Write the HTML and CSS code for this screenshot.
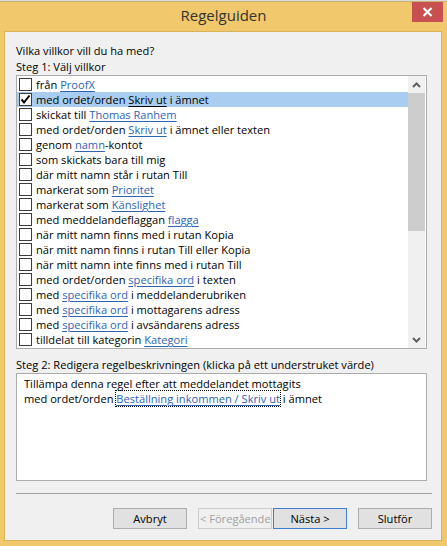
FILE: index.html
```html
<!DOCTYPE html>
<html lang="sv">
<head>
<meta charset="utf-8">
<title>Regelguiden</title>
<link rel="stylesheet" href="styles.css">
</head>
<body>
<div class="window">
  <div class="topstrip"></div>
  <div class="titlebar">
    <div class="title">Regelguiden</div>
    <div class="close">
      <svg width="11" height="10" viewBox="0 0 11 10"><path d="M1.5 1 L9.5 9 M9.5 1 L1.5 9" stroke="#fff" stroke-width="2.2" fill="none"/></svg>
    </div>
  </div>
  <div class="client">
    <div class="label">Vilka villkor vill du ha med?</div>
    <div class="label">Steg 1: Välj villkor</div>
    <div class="listbox">
      <div class="list">
        <div class="row"><span class="cb"></span><span class="txt">från <u class="lnk">ProofX</u></span></div>
        <div class="row sel"><span class="cb"><svg width="11" height="11" viewBox="0 0 11 11"><path d="M1.5 5.5 L4 8.5 L9.5 1.5" stroke="#000" stroke-width="2" fill="none"/></svg></span><span class="txt">med ordet/orden <u class="lnk dark">Skriv ut</u> i ämnet</span></div>
        <div class="row"><span class="cb"></span><span class="txt">skickat till <u class="lnk">Thomas Ranhem</u></span></div>
        <div class="row"><span class="cb"></span><span class="txt">med ordet/orden <u class="lnk">Skriv ut</u> i ämnet eller texten</span></div>
        <div class="row"><span class="cb"></span><span class="txt">genom <u class="lnk">namn</u>-kontot</span></div>
        <div class="row"><span class="cb"></span><span class="txt">som skickats bara till mig</span></div>
        <div class="row"><span class="cb"></span><span class="txt">där mitt namn står i rutan Till</span></div>
        <div class="row"><span class="cb"></span><span class="txt">markerat som <u class="lnk">Prioritet</u></span></div>
        <div class="row"><span class="cb"></span><span class="txt">markerat som <u class="lnk">Känslighet</u></span></div>
        <div class="row"><span class="cb"></span><span class="txt">med meddelandeflaggan <u class="lnk">flagga</u></span></div>
        <div class="row"><span class="cb"></span><span class="txt">när mitt namn finns med i rutan Kopia</span></div>
        <div class="row"><span class="cb"></span><span class="txt">när mitt namn finns i rutan Till eller Kopia</span></div>
        <div class="row"><span class="cb"></span><span class="txt">när mitt namn inte finns med i rutan Till</span></div>
        <div class="row"><span class="cb"></span><span class="txt">med ordet/orden <u class="lnk">specifika ord</u> i texten</span></div>
        <div class="row"><span class="cb"></span><span class="txt">med <u class="lnk">specifika ord</u> i meddelanderubriken</span></div>
        <div class="row"><span class="cb"></span><span class="txt">med <u class="lnk">specifika ord</u> i mottagarens adress</span></div>
        <div class="row"><span class="cb"></span><span class="txt">med <u class="lnk">specifika ord</u> i avsändarens adress</span></div>
        <div class="row"><span class="cb"></span><span class="txt">tilldelat till kategorin <u class="lnk">Kategori</u></span></div>
      </div>
      <div class="scrollbar">
        <div class="arrow">
          <svg width="9" height="6" viewBox="0 0 9 6"><path d="M1 5 L4.5 1.5 L8 5" stroke="#606060" stroke-width="2" fill="none"/></svg>
        </div>
        <div class="thumb"></div>
        <div class="track"></div>
        <div class="arrow">
          <svg width="9" height="6" viewBox="0 0 9 6"><path d="M1 1 L4.5 4.5 L8 1" stroke="#606060" stroke-width="2" fill="none"/></svg>
        </div>
      </div>
    </div>
    <div class="label step2">Steg 2: Redigera regelbeskrivningen (klicka på ett understruket värde)</div>
    <div class="desc">
      <div>Tillämpa denna regel efter att meddelandet mottagits</div>
      <div>med ordet/orden <span class="focus"><u class="lnk">Beställning inkommen / Skriv ut</u></span> i ämnet</div>
    </div>
    <div class="sep"></div>
    <div class="buttons">
      <div class="btn">Avbryt</div>
      <div class="btn disabled"><span>&lt; Föregående</span></div>
      <div class="btn default">Nästa &gt;</div>
      <div class="btn">Slutför</div>
    </div>
  </div>
</div>
</body>
</html>
```

FILE: styles.css
```css
html, body {
  margin: 0;
  padding: 0;
}
body {
  width: 447px;
  height: 546px;
  overflow: hidden;
  font-family: "Open Sans", "Noto Sans", "Liberation Sans", sans-serif;
  font-size: 11.1px;
  color: #000;
}
.window {
  width: 447px;
  height: 546px;
  background: #f1c86b;
  display: flex;
  flex-direction: column;
}
.topstrip {
  height: 1px;
  background: #dcdcdc;
  border-bottom: 1px solid #c8b070;
}
.titlebar {
  height: 29px;
  display: flex;
  align-items: flex-start;
}
.title {
  flex: 1;
  text-align: center;
  padding-left: 35px;
  font-size: 15px;
  line-height: 27px;
  color: #333;
}
.close {
  width: 31px;
  height: 20px;
  margin-right: 4px;
  background: #c75050;
  display: flex;
  align-items: center;
  justify-content: center;
}
.client {
  margin: 0 5px 5px 4px;
  flex: 1;
  background: #f0f0f0;
  border: 1px solid #d9b259;
  padding: 11px 10px 0 11px;
  display: flex;
  flex-direction: column;
}
.label {
  line-height: 16px;
  height: 16px;
  white-space: nowrap;
}
.listbox {
  width: 409px;
  height: 272px;
  border: 1px solid #acacac;
  background: #fff;
  display: flex;
}
.list {
  flex: 1;
  padding-top: 1px;
}
.row {
  height: 15px;
  display: flex;
  align-items: center;
  padding-left: 2px;
  white-space: nowrap;
}
.row.sel {
  background: #a8cdf1;
}
.cb {
  width: 11px;
  height: 11px;
  border: 1px solid #3c3c3c;
  background: #fff;
  margin-right: 4px;
  display: flex;
  align-items: center;
  justify-content: center;
  flex: none;
}
.txt {
  line-height: 15px;
}
.lnk {
  color: #2d64b3;
  text-decoration: underline;
  text-underline-offset: 2px;
}
.lnk.dark {
  color: #000;
}
.scrollbar {
  width: 17px;
  margin-right: 1px;
  background: #f0f0f0;
  display: flex;
  flex-direction: column;
}
.arrow {
  height: 17px;
  display: flex;
  align-items: center;
  justify-content: center;
}
.thumb {
  height: 138px;
  background: #cdcdcd;
}
.track {
  flex: 1;
}
.step2 {
  margin-top: 8px;
}
.desc {
  width: 402px;
  height: 104px;
  border: 1px solid #acacac;
  background: #fff;
  padding: 2px 0 0 7px;
  line-height: 15px;
  white-space: nowrap;
}
.focus {
  outline: 1px dotted #000;
  outline-offset: 0;
}
.sep {
  margin-top: 12px;
  height: 1px;
  width: 416px;
  background: #a0a0a0;
}
.buttons {
  margin-top: 14px;
  display: flex;
  justify-content: flex-end;
  width: 416px;
}
.btn {
  width: 72px;
  height: 19px;
  border: 1px solid #adadad;
  background: #e1e1e1;
  display: flex;
  align-items: center;
  justify-content: center;
  line-height: 19px;
  margin-left: 11px;
  overflow: hidden;
  white-space: nowrap;
}
.btn.disabled {
  border-color: #cccccc;
  background: #f0f0f0;
  color: #a0a0a0;
  justify-content: flex-start;
  padding-left: 1px;
  width: 71px;
}
.btn.default {
  border-color: #3c7fd1;
  margin-left: 1px;
}
```
